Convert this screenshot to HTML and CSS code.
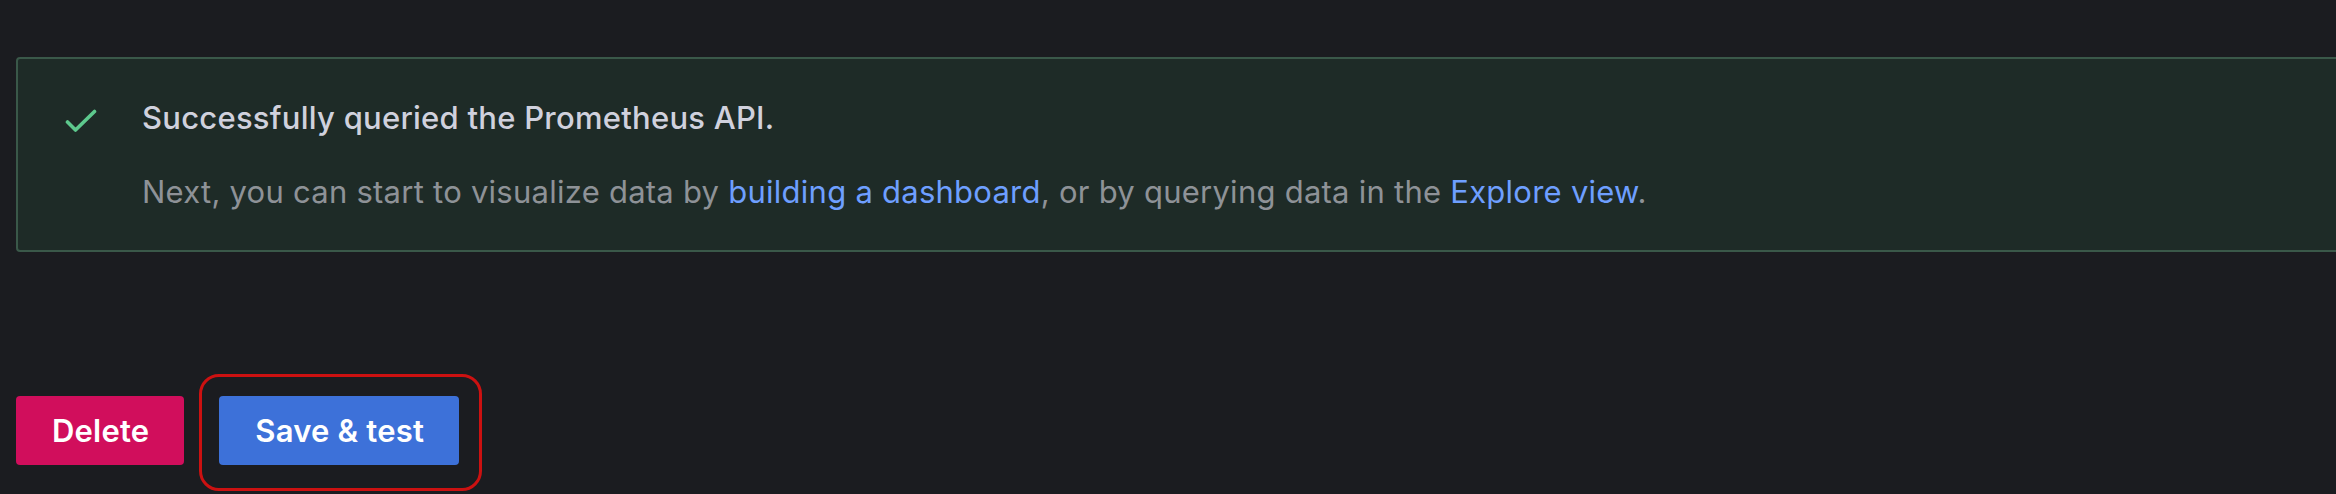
FILE: index.html
```html
<!DOCTYPE html>
<html lang="en">
<head>
<meta charset="utf-8">
<title>Data source test</title>
<link rel="stylesheet" href="styles.css">
</head>
<body>
<div class="page">
  <div class="alert">
    <div class="alert-icon">
      <svg width="32" height="24" viewBox="0 0 32 24" fill="none"><path d="M2.5 13 L10.5 21 L29.5 2.5" stroke="#5dc98d" stroke-width="3.6" stroke-linecap="round" stroke-linejoin="round"/></svg>
    </div>
    <div class="alert-body">
      <div class="alert-title">Successfully queried the Prometheus API.</div>
      <div class="alert-text">Next, you can start to visualize data by <a class="link" href="#">building a dashboard</a>, or by querying data in the <a class="link" href="#">Explore view</a>.</div>
    </div>
  </div>
  <div class="actions">
    <button class="btn btn-danger">Delete</button>
    <div class="highlight-wrap">
      <button class="btn btn-primary">Save &amp; test</button>
      <span class="highlight"></span>
    </div>
  </div>
</div>
</body>
</html>
```
FILE: styles.css
```css
html, body {
  margin: 0;
  padding: 0;
  background: #1b1c20;
  overflow: hidden;
}
body {
  font-family: Inter, "Noto Sans", sans-serif;
  height: 494px;
}
.page {
  padding: 57px 0 0 16px;
}
.alert {
  display: flex;
  align-items: flex-start;
  background: #1e2b27;
  border: 2px solid #3a5849;
  border-radius: 4px;
  margin-right: -60px;
  padding: 36px 0 36px 47px;
}
.alert-icon {
  display: flex;
  align-items: center;
  height: 45px;
  width: 32px;
  margin-right: 45px;
  margin-top: 3px;
}
.alert-icon svg {
  display: block;
}
.alert-body {
  display: flex;
  flex-direction: column;
  gap: 29px;
}
.alert-title {
  font-size: 31px;
  line-height: 45px;
  font-weight: 500;
  letter-spacing: 0.25px;
  color: #d0d1dd;
}
.alert-text {
  font-size: 31px;
  line-height: 45px;
  font-weight: 400;
  letter-spacing: 0.25px;
  color: #8e9297;
}
.link {
  color: #6e9fff;
  text-decoration: none;
}
.actions {
  display: flex;
  align-items: center;
  gap: 35px;
  margin-top: 144px;
}
.btn {
  font-family: Inter, "Noto Sans", sans-serif;
  font-size: 31px;
  font-weight: 600;
  letter-spacing: 0.2px;
  color: #ffffff;
  height: 69px;
  padding: 0 35px 0 36px;
  border: none;
  border-radius: 4px;
  cursor: pointer;
}
.btn-danger {
  background: #d10e5c;
}
.btn-primary {
  background: #3d71d9;
}
.highlight-wrap {
  position: relative;
  display: flex;
}
.highlight {
  position: absolute;
  top: -22px;
  left: -20px;
  right: -23px;
  bottom: -26px;
  border: 3px solid #cc1111;
  border-radius: 20px;
  pointer-events: none;
}
```
